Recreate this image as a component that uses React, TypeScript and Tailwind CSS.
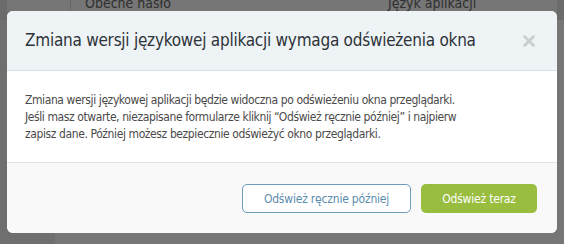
import { X } from 'lucide-react';

export default function App() {
  return (
    <div
      className="relative w-[564px] h-[244px] overflow-hidden bg-[#767676]"
      style={{ fontFamily: '"DejaVu Sans Condensed", "DejaVu Sans", sans-serif' }}
    >
      {/* dimmed page behind */}
      <div className="flex flex-col h-full">
        <div className="flex h-[20px]">
          <div className="w-[7px] bg-[#6b6b6b]" />
          <div className="w-[64px] border-r border-[#666]" />
          <div className="flex-1 flex text-[14px] text-[#2f2f2f] leading-none">
            <div className="w-[317px] pl-[14px] -mt-[4px]">Obecne hasło</div>
            <div className="-mt-[4px]">Język aplikacji</div>
          </div>
          <div className="w-[7px] bg-[#6b6b6b]" />
        </div>
        <div className="flex-1 flex">
          <div className="w-[55px] bg-[#6f6f6f]" />
          <div className="flex-1" />
        </div>
      </div>

      {/* modal */}
      <div className="absolute left-[7px] top-[11px] w-[550px] rounded-[6px] overflow-hidden bg-white">
        <div className="h-[60px] flex items-center justify-between pl-[18px] pr-[19px] bg-[#eef3f6] border-b border-[#d6e2e8]">
          <h2 className="text-[17px] text-[#2d3338] tracking-[-0.25px] whitespace-nowrap">
            Zmiana wersji językowej aplikacji wymaga odświeżenia okna
          </h2>
          <X className="w-[18px] h-[18px] text-[#c9cdd0]" strokeWidth={3.5} />
        </div>
        <div className="h-[92px] px-[18px] pt-[21px] border-b border-[#e2e2e2]">
          <p className="text-[12px] leading-[17px] tracking-[-0.4px] text-[#4a4a4a]">
            Zmiana wersji językowej aplikacji będzie widoczna po odświeżeniu okna przeglądarki.
            <br />
            Jeśli masz otwarte, niezapisane formularze kliknij “Odśwież ręcznie później” i najpierw
            <br />
            zapisz dane. Później możesz bezpiecznie odświeżyć okno przeglądarki.
          </p>
        </div>
        <div className="h-[70px] bg-[#f9f9f9] flex items-start justify-end gap-[10px] pt-[21px] pr-[20px]">
          <button className="h-[29px] w-[169px] rounded-[5px] border border-[#6e9cbb] bg-white text-[12px] tracking-[-0.2px] text-[#5b8cae]">
            Odśwież ręcznie później
          </button>
          <button className="h-[29px] w-[116px] rounded-[5px] bg-[#98bd3f] text-[12px] tracking-[-0.2px] text-white">
            Odśwież teraz
          </button>
        </div>
      </div>
    </div>
  );
}
